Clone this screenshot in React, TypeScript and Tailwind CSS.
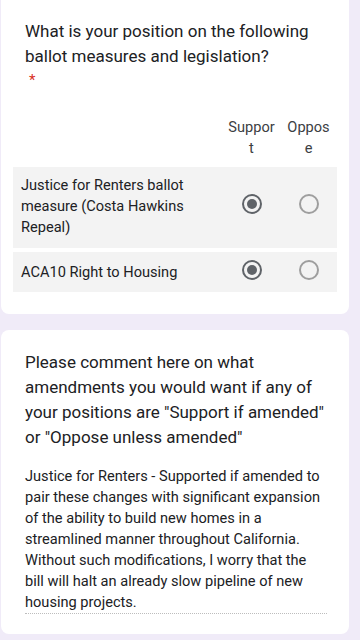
const rows = [
  { label: "Justice for Renters ballot measure (Costa Hawkins Repeal)", pick: 0 },
  { label: "ACA10 Right to Housing", pick: 0 },
];

function Radio({ on }: { on: boolean }) {
  return (
    <div
      className={`w-[20px] h-[20px] rounded-full border-2 flex items-center justify-center -mt-[6px] ${
        on ? "border-[#5f6368]" : "border-[#9e9e9e]"
      }`}
    >
      {on && <div className="w-[10px] h-[10px] rounded-full bg-[#5f6368]" />}
    </div>
  );
}

export default function App() {
  return (
    <div
      className="min-h-[640px] bg-[#f0ebf8] pl-[1px] pr-[11px] overflow-hidden text-[#202124]"
      style={{ fontFamily: "Roboto, 'Noto Sans', sans-serif" }}
    >
      {/* question card */}
      <div className="-mt-[8px] bg-white rounded-[8px] pt-[27px] pb-[22px] px-[12px]">
        <div className="px-[12px] text-[17px] leading-[25px]">
          What is your position on the following ballot measures and legislation?
        </div>
        <div className="mt-[1px] text-[15px] leading-[20px] text-[#d93025] pl-[16px]">*</div>
        <div className="mt-[27px] flex justify-end text-[14.6px] leading-[21px] text-[#3c4043] text-center">
          <div className="w-[57px]">
            Suppor
            <br />t
          </div>
          <div className="w-[57px]">
            Oppos
            <br />e
          </div>
        </div>
        <div className="mt-[8px] flex flex-col gap-[4px]">
          {rows.map((r, i) => (
            <div
              key={r.label}
              className={`bg-[#f3f3f3] flex items-center ${i === 0 ? "pt-[8px] pb-[10px]" : "pt-[10px] pb-[9px]"}`}
            >
              <div className="flex-1 pl-[8px] pr-[16px] text-[14.6px] leading-[21px]">{r.label}</div>
              <div className="w-[57px] flex justify-center">
                <Radio on={r.pick === 0} />
              </div>
              <div className="w-[57px] flex justify-center">
                <Radio on={r.pick === 1} />
              </div>
            </div>
          ))}
        </div>
      </div>

      {/* comment card */}
      <div className="mt-[16px] bg-white rounded-[8px] pt-[20px] pb-[20px] pl-[24px] pr-[22px]">
        <div className="text-[17px] leading-[25px]">
          Please comment here on what amendments you would want if any of your positions are "Support if
          amended" or "Oppose unless amended"
        </div>
        <div className="mt-[16px] text-[14.6px] leading-[21px] border-b border-dotted border-[#bdbdbd]">
          Justice for Renters - Supported if amended to pair these changes with significant expansion of the
          ability to build new homes in a streamlined manner throughout California. Without such
          modifications, I worry that the bill will halt an already slow pipeline of new housing projects.
        </div>
      </div>
    </div>
  );
}
